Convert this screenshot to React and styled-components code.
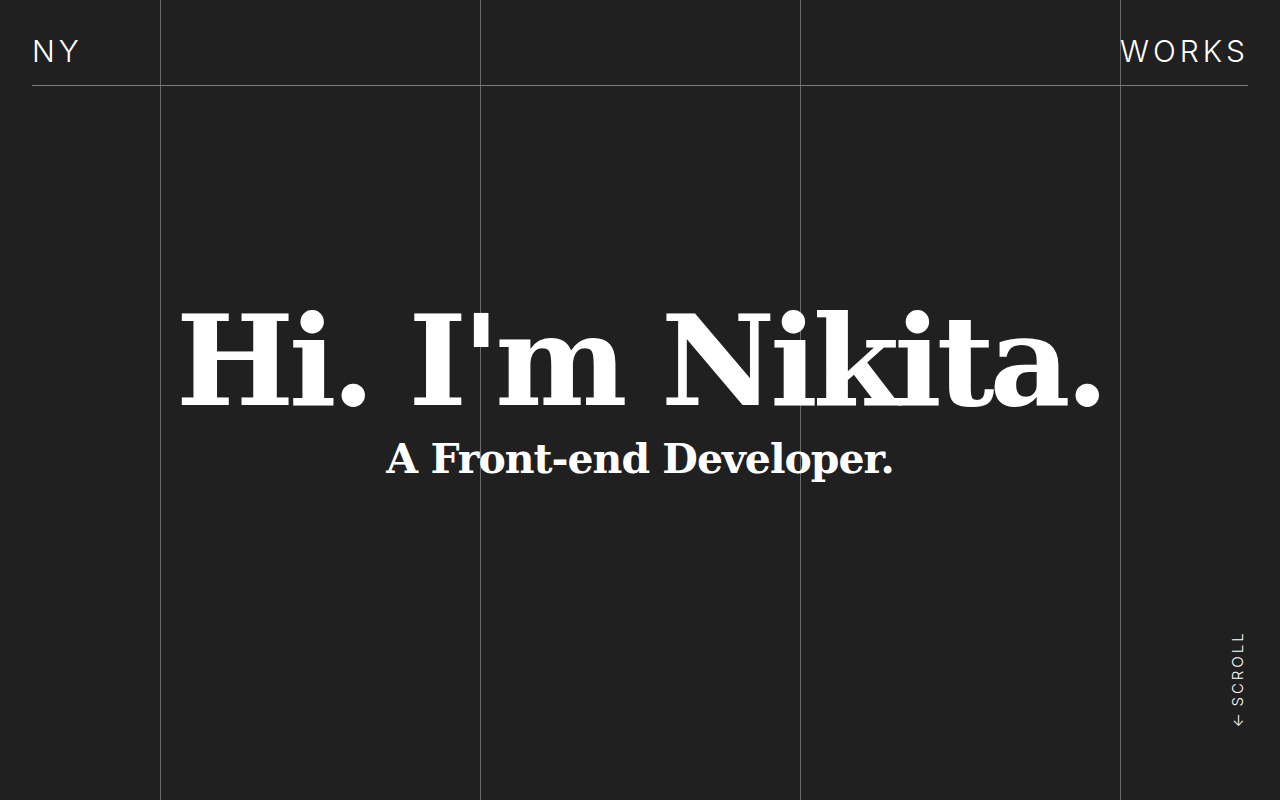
import React from 'react';
import styled, { createGlobalStyle } from 'styled-components';

const GlobalStyle = createGlobalStyle`
  html, body {
    margin: 0;
    padding: 0;
    background: #202020;
  }
  * {
    box-sizing: border-box;
  }
`;

function App() {
  return (
    <Page>
      <GlobalStyle />
      <Grid aria-hidden="true">
        <Line />
        <Line />
        <Line />
        <Line />
      </Grid>
      <Header>
        <Brand>NY</Brand>
        <NavLink href="#works">WORKS</NavLink>
      </Header>
      <Hero>
        <Title>Hi. I'm Nikita.</Title>
        <Subtitle>A Front-end Developer.</Subtitle>
      </Hero>
      <Scroll>
        <Arrow>←</Arrow>
        <span>SCROLL</span>
      </Scroll>
    </Page>
  );
}

export default App;

const Page = styled.div`
  position: relative;
  height: 100vh;
  overflow: hidden;
  display: flex;
  flex-direction: column;
  padding: 0 32px;
  background: #202020;
  color: #ffffff;
`;

const Grid = styled.div`
  position: absolute;
  inset: 0;
  display: grid;
  grid-template-columns: repeat(4, 320px);
  padding-left: 160px;
  pointer-events: none;
`;

const Line = styled.div`
  border-left: 1px solid #6a6a6a;
`;

const Header = styled.header`
  position: relative;
  display: flex;
  justify-content: space-between;
  align-items: center;
  height: 86px;
  padding-top: 16px;
  border-bottom: 1px solid #7a7a7a;
  font-family: 'Inter', 'DejaVu Sans', sans-serif;
  font-weight: 300;
  font-size: 30px;
  letter-spacing: 4px;
`;

const Brand = styled.div``;

const NavLink = styled.a`
  margin-right: -1px;
  color: #ffffff;
  text-decoration: none;
`;

const Hero = styled.main`
  position: relative;
  flex: 1;
  display: flex;
  flex-direction: column;
  align-items: center;
  padding-top: 213px;
  font-family: 'DejaVu Serif', serif;
  font-weight: 700;
`;

const Title = styled.h1`
  margin: 0;
  font-size: 125px;
  line-height: 1;
  letter-spacing: -5px;
`;

const Subtitle = styled.h2`
  margin: 15px 0 0;
  font-size: 41px;
  line-height: 1;
  letter-spacing: -1px;
`;

const Scroll = styled.div`
  position: absolute;
  right: 35px;
  bottom: 72px;
  display: flex;
  align-items: center;
  gap: 7px;
  writing-mode: vertical-rl;
  transform: rotate(180deg);
  font-family: 'Inter', 'DejaVu Sans', sans-serif;
  font-weight: 300;
  font-size: 15px;
  line-height: 1;
  letter-spacing: 3px;
`;

const Arrow = styled.span`
  font-size: 15px;
  letter-spacing: 0;
`;
